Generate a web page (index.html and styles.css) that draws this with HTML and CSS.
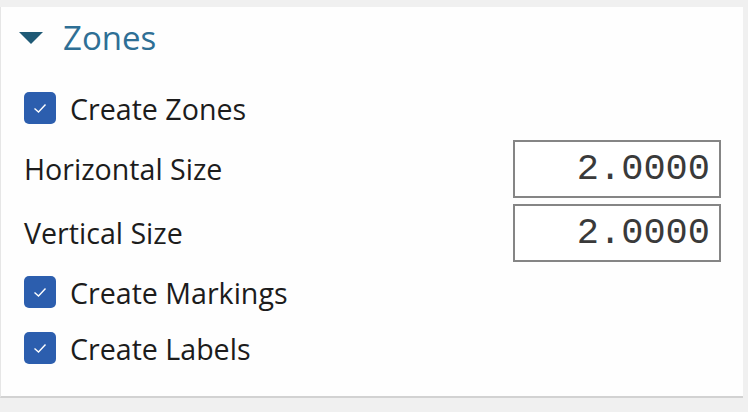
FILE: index.html
```html
<!DOCTYPE html>
<html>
<head>
    <link rel="stylesheet" href="styles.css">
</head>
<body>
    <div class="panel">
        <div class="section-head">
            <svg class="caret" width="24" height="12" viewBox="0 0 24 12">
                <polygon points="0 0 24 0 12 12" fill="#1f5a76"></polygon>
            </svg>
            <span class="section-title">Zones</span>
        </div>

        <label class="check-row">
            <span class="box">
                <svg width="20" height="20" viewBox="0 0 20 20" fill="none" stroke="white" stroke-width="1.4">
                    <polyline points="4.5 10.5 8.5 14 15.5 6.5"></polyline>
                </svg>
            </span>
            <span class="label">Create Zones</span>
        </label>

        <div class="field-row">
            <span class="label">Horizontal Size</span>
            <div class="num-box">2.0000</div>
        </div>

        <div class="field-row">
            <span class="label">Vertical Size</span>
            <div class="num-box">2.0000</div>
        </div>

        <label class="check-row">
            <span class="box">
                <svg width="20" height="20" viewBox="0 0 20 20" fill="none" stroke="white" stroke-width="1.4">
                    <polyline points="4.5 10.5 8.5 14 15.5 6.5"></polyline>
                </svg>
            </span>
            <span class="label">Create Markings</span>
        </label>

        <label class="check-row">
            <span class="box">
                <svg width="20" height="20" viewBox="0 0 20 20" fill="none" stroke="white" stroke-width="1.4">
                    <polyline points="4.5 10.5 8.5 14 15.5 6.5"></polyline>
                </svg>
            </span>
            <span class="label">Create Labels</span>
        </label>
    </div>
</body>
</html>
```

FILE: styles.css
```css
body {
    margin: 0;
    padding: 0;
    background: #f0f0f0;
    font-family: "Open Sans", "Noto Sans", sans-serif;
    color: #1c1c1c;
}

.panel {
    margin-top: 7px;
    margin-right: 5px;
    height: 391px;
    box-sizing: border-box;
    background: #fefefe;
    border-left: 1px solid #e6e6e6;
    border-bottom: 2px solid #d2d2d2;
    padding: 0 22px 0 23px;
    display: flex;
    flex-direction: column;
}

.section-head {
    height: 60px;
    margin-bottom: 13px;
    display: flex;
    align-items: center;
    gap: 20px;
}

.caret {
    margin-left: -5px;
    margin-top: 2px;
}

.section-title {
    font-size: 33px;
    color: #2e6f95;
}

.check-row {
    height: 56px;
    display: flex;
    align-items: center;
    gap: 14px;
}

.box {
    width: 32px;
    height: 32px;
    border-radius: 5px;
    background: #2c5eae;
    display: flex;
    align-items: center;
    justify-content: center;
}

.label {
    font-size: 28.6px;
}

.field-row {
    height: 64px;
    display: flex;
    align-items: center;
    justify-content: space-between;
}

.num-box {
    width: 208px;
    height: 58px;
    margin-top: 2px;
    box-sizing: border-box;
    border: 2px solid #858585;
    background: white;
    font-family: "Liberation Mono", monospace;
    font-size: 37px;
    color: #3a3a3a;
    text-align: right;
    padding-right: 9px;
    line-height: 54px;
}
```
